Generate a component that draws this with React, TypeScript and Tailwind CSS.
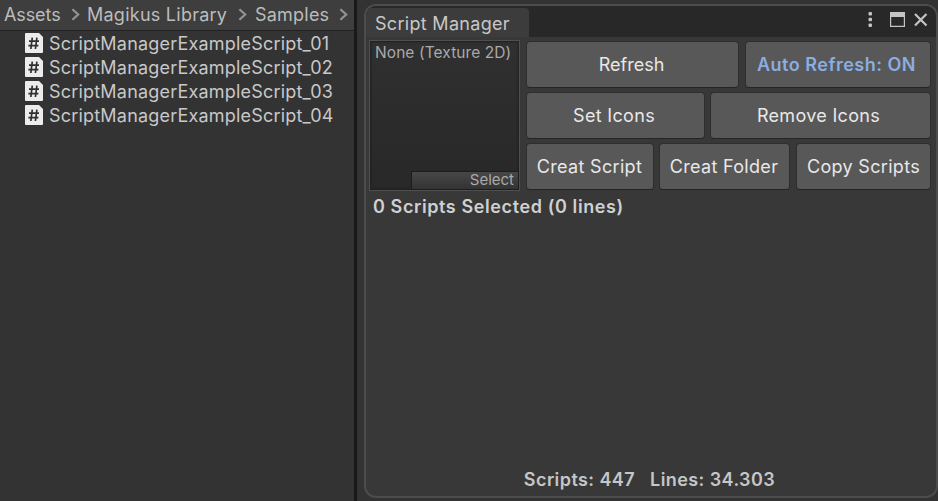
import React from "react";

function Chevron({ className }: { className: string }) {
  return (
    <svg className={`h-[14px] w-[10px] shrink-0 ${className}`} viewBox="0 0 10 14" fill="none" stroke="#939393" strokeWidth="2.2">
      <path d="M1.4 1.2 L7.2 6.5 L1.4 11.8" />
    </svg>
  );
}

function ScriptIcon() {
  return (
    <svg className="mt-px h-5 w-[18px] shrink-0" viewBox="0 0 18 20">
      <path d="M1 0 H14 L18 4 V19 Q18 20 17 20 H1 Q0 20 0 19 V1 Q0 0 1 0Z" fill="#ececec" />
      <path d="M7.3 4.6 L5.8 16 M11.9 4.6 L10.4 16 M4 8.2 H14 M3.4 12.6 H13.4" stroke="#303030" strokeWidth="1.7" fill="none" />
    </svg>
  );
}

function Button({ label, className, text = "" }: { label: string; className: string; text?: string }) {
  return (
    <button
      className={`flex h-[47px] shrink-0 items-center justify-center rounded-[4px] border border-[#2e2e2e] border-b-[#242424] bg-[#585858] whitespace-nowrap ${className}`}
    >
      <span className={text || "tracking-[0.32px] text-[#e8e8e8]"}>{label}</span>
    </button>
  );
}

const scripts = ["01", "02", "03", "04"];

export default function App() {
  return (
    <div className="flex h-[501px] w-[938px] overflow-hidden bg-[#333333] font-['Inter',sans-serif] text-[18px] leading-6 tracking-[0.2px] text-[#c8c8c8]">
      <aside className="w-[354px] shrink-0 bg-[#333333]">
        <nav className="flex h-[31px] items-center border-b border-[#222222] bg-[#3e3e3e] pl-1 whitespace-nowrap text-[#bcbcbc]">
          <span className="w-[67px] tracking-[-0.1px]">Assets</span>
          <Chevron className="mr-[6px]" />
          <span className="w-[151px] tracking-[0.25px]">Magikus Library</span>
          <Chevron className="mr-[7px]" />
          <span className="w-[84px] tracking-[0.22px]">Samples</span>
          <Chevron className="" />
        </nav>
        <ul className="pt-px pl-[25px]">
          {scripts.map((n) => (
            <li key={n} className="flex h-6 gap-[6px] whitespace-nowrap">
              <ScriptIcon />
              <span>ScriptManagerExampleScript_{n}</span>
            </li>
          ))}
        </ul>
      </aside>
      <div className="w-[3px] shrink-0 bg-[#191919]" />
      <main className="flex-1 pt-1 pl-[7px]">
        <section className="flex h-[494px] w-[574px] flex-col overflow-hidden rounded-[12px] border-2 border-[#4c4c4c] bg-[#383838]">
          <header className="flex h-[31px] shrink-0 justify-between bg-[#282828] pt-[2px]">
            <div className="w-[163px] rounded-t-[4px] bg-[#3c3c3c] pt-[4px] pl-[9px] tracking-[0.3px]">Script Manager</div>
            <svg className="h-[28px] w-[72px]" viewBox="0 0 72 28" fill="#c4c4c4">
              <rect x="4.5" y="4" width="3.5" height="3.5" rx="1" />
              <rect x="4.5" y="9.8" width="3.5" height="3.5" rx="1" />
              <rect x="4.5" y="15.5" width="3.5" height="3.5" rx="1" />
              <path fillRule="evenodd" d="M26 4H41V19H26Z M27.2 9H39.8V17.8H27.2Z" />
              <path d="M51 6 L62.5 17.5 M62.5 6 L51 17.5" stroke="#c4c4c4" strokeWidth="2.2" />
            </svg>
          </header>
          <div className="flex h-[153px] shrink-0 pt-[3px] pl-[3px]">
            <div className="flex h-[151px] w-[151px] shrink-0 flex-col justify-between border border-[#505050] bg-gradient-to-b from-[#303030] to-[#282828] text-[15.5px] text-[#a9a9a9] shadow-[inset_0_0_2px_1px_#202020]">
              <span className="pl-[5px] tracking-[0.08px] whitespace-nowrap">None (Texture 2D)</span>
              <div className="flex h-[19px] w-[108px] items-center justify-end self-end rounded-tl-[2px] border border-[#1d1d1d] bg-gradient-to-b from-[#484848] to-[#333333] pr-[4px] pb-px text-[15px] tracking-[0px]">
                Select
              </div>
            </div>
            <div className="flex flex-col gap-1 pt-px pl-[6px]">
              <div className="flex gap-[6px]">
                <Button label="Refresh" className="w-[213px] pr-[2px]" text="text-[#e8e8e8] tracking-[0px]" />
                <Button label="Auto Refresh: ON" className="w-[186px] pr-[3px]" text="font-semibold text-[#8aade2] tracking-[0.5px]" />
              </div>
              <div className="flex gap-[5px]">
                <Button label="Set Icons" className="w-[179px] pr-[3px]" />
                <Button label="Remove Icons" className="w-[221px] pr-[4px]" />
              </div>
              <div className="flex gap-[5px]">
                <Button label="Creat Script" className="w-[128px] pr-px" />
                <Button label="Creat Folder" className="w-[131px] pr-px" />
                <Button label="Copy Scripts" className="ml-px w-[135px]" />
              </div>
            </div>
          </div>
          <p className="pt-[5px] pl-[7px] font-semibold tracking-[0.6px] text-[#d0d0d0]">0 Scripts Selected (0 lines)</p>
          <footer className="mt-auto mr-[3px] mb-1 flex justify-center gap-[15px] font-semibold tracking-[0.42px] whitespace-nowrap text-[#c6c6c6]">
            <span>Scripts: 447</span>
            <span>Lines: 34.303</span>
          </footer>
        </section>
      </main>
    </div>
  );
}
